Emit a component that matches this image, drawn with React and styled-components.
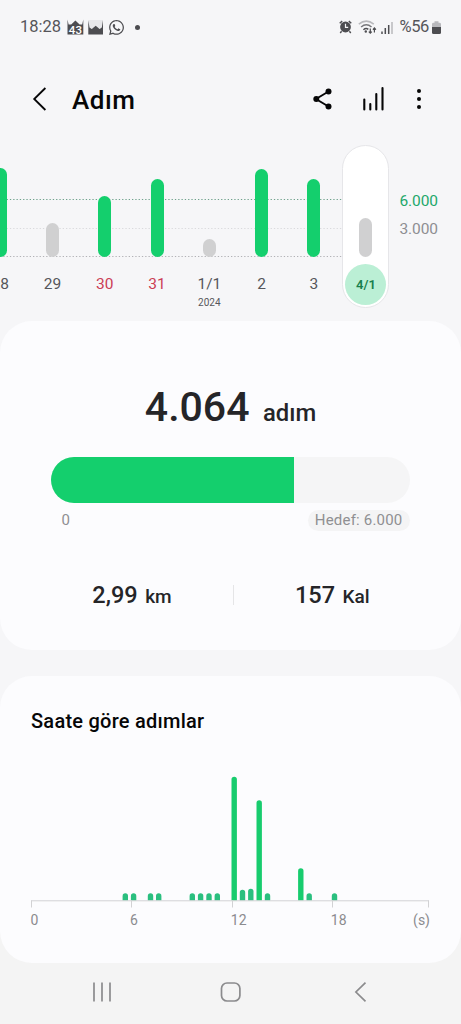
import React from 'react';
import styled, { createGlobalStyle } from 'styled-components';
import { FaWhatsapp } from 'react-icons/fa';

const GlobalStyle = createGlobalStyle`
  * { box-sizing: border-box; }
  body {
    margin: 0;
    background: #f6f6f8;
    font-family: Roboto, "Liberation Sans", sans-serif;
    color: #252528;
  }
`;

const Screen = styled.div`
  width: 461px;
  height: 1024px;
  overflow: hidden;
  display: flex;
  flex-direction: column;
  background: #f6f6f8;
`;

const Icon = styled.svg`
  display: block;
  flex: none;
  overflow: visible;
`;

const StatusBar = styled.div`
  height: 54px;
  padding: 0 20px;
  display: flex;
  align-items: center;
  justify-content: space-between;
  color: #55555a;
  font-size: 16.5px;
  line-height: 20px;
`;

const StatusGroup = styled.div`
  display: flex;
  align-items: center;
  gap: ${(p) => p.$gap}px;
`;

const Clock = styled.span`
  width: 42px;
  margin-right: 1px;
`;

const Percent = styled.span`
  width: 29px;
  margin: 0 -2px 0 1px;
  font-size: 16.5px;
  letter-spacing: -0.4px;
`;

const Dot = styled.span`
  width: 5px;
  height: 5px;
  margin-left: 6px;
  border-radius: 50%;
  background: #4c4c50;
`;

const Header = styled.header`
  height: 91px;
  padding: 0 38px 2px 33px;
  display: flex;
  align-items: center;
`;

const Title = styled.h1`
  flex: 1;
  margin: 2px 0 0 26px;
  font-size: 26px;
  line-height: 32px;
  font-weight: 500;
  letter-spacing: 0.5px;
  color: #060607;
`;

const Actions = styled.div`
  display: flex;
  align-items: center;
  gap: 31px;
`;

const History = styled.section`
  position: relative;
  height: 176px;
  display: flex;
`;

const GridLines = styled.svg`
  position: absolute;
  left: 0;
  top: 0;
`;

const Days = styled.div`
  position: relative;
  display: flex;
  flex: none;
  margin-left: -26px;
`;

const Day = styled.div`
  width: 52.3px;
  height: 163px;
  display: flex;
  flex-direction: column;
  align-items: center;
`;

const DayTrack = styled.div`
  flex: none;
  height: 112px;
  display: flex;
  align-items: flex-end;
`;

const DayBar = styled.div`
  width: 13px;
  height: ${(p) => p.$height}px;
  border-radius: 7px;
  background: ${(p) => (p.$reached ? '#14cf6d' : '#d0d0d1')};
`;

const DayLabel = styled.div`
  margin-top: 17px;
  font-size: 15.5px;
  line-height: 20px;
  color: ${(p) => (p.$holiday ? '#cb3d55' : '#56565b')};
`;

const Year = styled.div`
  margin-top: 3px;
  font-size: 10px;
  line-height: 12px;
  color: #56565b;
`;

const Selected = styled.div`
  width: 47px;
  height: 163px;
  margin-left: 2.4px;
  padding-bottom: 2px;
  display: flex;
  flex-direction: column;
  align-items: center;
  border: 1px solid #e6e6e9;
  border-radius: 24px;
  background: #fff;
  ${DayTrack} { height: 111px; }
`;

const Today = styled.div`
  width: 41px;
  height: 41px;
  margin-top: 7px;
  border-radius: 50%;
  background: #bbefd5;
  color: #187f4d;
  font-size: 13px;
  font-weight: 600;
  line-height: 41px;
  text-align: center;
`;

const Scale = styled.div`
  margin: 46px 0 0 10px;
  display: flex;
  flex-direction: column;
  gap: 8px;
`;

const ScaleLabel = styled.div`
  font-size: 15.5px;
  line-height: 20px;
  letter-spacing: -0.1px;
  color: ${(p) => (p.$goal ? '#1ea86b' : '#8e8e92')};
`;

const Card = styled.section`
  flex: none;
  height: ${(p) => p.$height}px;
  border-radius: 32px;
  background: #fcfcfe;
`;

const SummaryCard = styled(Card)`
  margin-bottom: 26px;
  padding: 61px 51px 0;
`;

const Total = styled.div`
  display: flex;
  justify-content: center;
  align-items: baseline;
  gap: 13.5px;
  height: 50px;
  line-height: 50px;
  font-size: 41px;
  font-weight: 500;
`;

const TotalUnit = styled.span`
  font-size: 23.8px;
`;

const Progress = styled.div`
  height: 46px;
  margin-top: 24.5px;
  border-radius: 23px;
  overflow: hidden;
  background: #f5f5f6;
`;

const ProgressFill = styled.div`
  height: 100%;
  background: #14cf6d;
`;

const ProgressLabels = styled.div`
  margin-top: 7.5px;
  padding-left: 10.5px;
  display: flex;
  justify-content: space-between;
  font-size: 15px;
  line-height: 21px;
  color: #8f8f92;
`;

const Goal = styled.span`
  padding: 0 7.5px 0 7px;
  border-radius: 11px;
  background: #f4f4f5;
  letter-spacing: 0.2px;
`;

const Stats = styled.div`
  margin: 49px 0 0;
  height: 30px;
  display: grid;
  grid-template-columns: 181.5px 1px 1fr;
  align-items: center;
`;

const Stat = styled.div`
  padding-left: ${(p) => p.$indent}px;
  display: flex;
  align-items: baseline;
  gap: 7.5px;
  font-size: 23.5px;
  line-height: 30px;
  font-weight: 500;
`;

const StatUnit = styled.span`
  font-size: 19px;
`;

const Divider = styled.span`
  height: 20px;
  margin-bottom: 2px;
  background: #e5e5e7;
`;

const HourlyCard = styled(Card)`
  padding: 32px 31px 0;
`;

const Heading = styled.h2`
  margin: 0;
  font-size: 20px;
  line-height: 26px;
  font-weight: 500;
  letter-spacing: 0.25px;
  color: #060607;
`;

const HourlyChart = styled.svg`
  display: block;
  margin-top: 36px;
  overflow: visible;
`;

const Hours = styled.div`
  display: grid;
  grid-template-columns: 99.5px 100.8px 100px 1fr;
  margin: 4px 0 0 -0.5px;
  font-size: 14px;
  line-height: 16px;
  color: #8b8b8e;
`;

const LastHours = styled.span`
  display: flex;
  justify-content: space-between;
`;

const NavBar = styled.nav`
  flex: 1;
  padding: 32px 95.5px 3px 92.5px;
  display: flex;
  align-items: center;
  justify-content: space-between;
  margin-top: -32px;
  background: #f4f4f4;
`;

const HourlyLayer = styled.div`
  position: relative;
  z-index: 1;
`;

const days = [
  { label: '28', height: 89, reached: true },
  { label: '29', height: 34 },
  { label: '30', height: 61, reached: true, holiday: true },
  { label: '31', height: 78, reached: true, holiday: true },
  { label: '1/1', height: 18, year: '2024' },
  { label: '2', height: 88, reached: true },
  { label: '3', height: 78, reached: true },
];

// [half-hour slot centre, bar height]
const hourly = [
  [94.3, 7], [102.6, 7], [119.5, 7], [127.7, 7],
  [161.3, 7], [169.6, 7], [178, 7], [186.3, 7],
  [203.2, 123.5], [211.5, 10.5], [219.8, 11.5], [228.2, 100], [236.5, 7],
  [269.8, 32], [278.2, 7], [303.5, 7],
];

const ticks = [0.5, 100.5, 201.5, 301.5, 397.5];

function StatusIcons() {
  return (
    <StatusBar>
      <StatusGroup $gap={4}>
        <Clock>18:28</Clock>
        <Icon width="17" height="16" viewBox="0 0 17 16">
          <path d="M0.5 0.5V15.5H16.3V0.5L15.2 5.4 12.6 5.4 8.4 1.6 4.2 5.4 1.6 5.4Z" fill="#4d4d51" />
          <text x="8.4" y="14.6" textAnchor="middle" fontSize="11.5" fontWeight="500" fill="#fff">43</text>
        </Icon>
        <Icon width="16" height="16" viewBox="0 0 16 16">
          <path d="M1 1H14.5V9H1Z" fill="#e8e8eb" />
          <path d="M0.3 1V15.5H15V1L13.8 8.4 11.6 10 7.7 6.8 3.8 10 1.5 8.4Z" fill="#4d4d51" />
        </Icon>
        <FaWhatsapp size={17} color="#4d4d51" />
        <Dot />
      </StatusGroup>
      <StatusGroup $gap={5.5}>
        <Icon width="13" height="14" viewBox="0 0 13 14">
          <circle cx="6.5" cy="7" r="5.4" fill="#4d4d51" />
          <path d="M0.7 3.3 3.2 1.1M12.3 3.3 9.8 1.1M2.6 11.2 1.2 13M10.4 11.2 11.8 13" stroke="#4d4d51" strokeWidth="1.4" />
          <path d="M6.5 3.7V7.3H9.2" fill="none" stroke="#f6f6f8" strokeWidth="1.2" />
        </Icon>
        <Icon width="18" height="14" viewBox="0 0 18 14">
          <g fill="none" strokeWidth="1.5">
            <path d="M0.8 4.2Q8.3-2 15.8 4.2" stroke="#b9b9bd" />
            <path d="M3.1 7Q8.3 2.6 13.5 7" stroke="#77777b" />
            <path d="M5.4 9.7Q8 7.5 10.3 9.3" stroke="#4d4d51" />
          </g>
          <circle cx="7.8" cy="11.5" r="1.2" fill="#4d4d51" />
          <path d="M12.3 8.5V13M10.8 11.6 12.3 13.2 13.8 11.6M16.4 12.5V8M14.9 9.6 16.4 8 17.9 9.6" fill="none" stroke="#4d4d51" strokeWidth="1.2" />
        </Icon>
        <Icon width="12" height="13" viewBox="0 0 12 13">
          <path d="M1 10.5V13M4.3 7V13M7.7 4V13" stroke="#4d4d51" strokeWidth="1.5" />
          <path d="M11 1V13" stroke="#b9b9bd" strokeWidth="1.5" />
        </Icon>
        <Percent>%56</Percent>
        <Icon width="9" height="13" viewBox="0 0 9 13">
          <path d="M0 3.2Q0 1.8 1.5 1.8H2.5V0.3H6.5V1.8H7.5Q9 1.8 9 3.2V6.5H0Z" fill="#b9b9bd" />
          <path d="M0 6H9V11.5Q9 13 7.5 13H1.5Q0 13 0 11.5Z" fill="#4d4d51" />
        </Icon>
      </StatusGroup>
    </StatusBar>
  );
}

export default function App() {
  return (
    <>
      <GlobalStyle />
      <Screen>
        <StatusIcons />
        <Header>
          <Icon width="13" height="24" viewBox="0 0 13 24">
            <path d="M12.4 1 1.2 12 12.4 23" fill="none" stroke="#060607" strokeWidth="1.8" />
          </Icon>
          <Title>Adım</Title>
          <Actions>
            <Icon width="20" height="22" viewBox="0.5 0 20 22">
              <path d="M16 3.5 3.5 11 16 18.5" fill="none" stroke="#060607" strokeWidth="1.9" />
              <circle cx="3.8" cy="11" r="3" fill="#060607" />
              <circle cx="16" cy="3.6" r="3" fill="#060607" />
              <circle cx="16" cy="18.4" r="3" fill="#060607" />
            </Icon>
            <Icon width="22" height="24" viewBox="1.7 0 22 24">
              <path d="M2 12.5V22.5M8 17V22.5M14 7V22.5M20.2 1V22.5" stroke="#060607" strokeWidth="2.1" strokeLinecap="round" />
            </Icon>
            <Icon width="6" height="22" viewBox="0 0 6 22">
              <circle cx="2" cy="2.9" r="2" fill="#060607" />
              <circle cx="2" cy="10.9" r="2" fill="#060607" />
              <circle cx="2" cy="18.9" r="2" fill="#060607" />
            </Icon>
          </Actions>
        </Header>

        <History>
          <GridLines width="343" height="120">
            <g strokeWidth="1" strokeDasharray="1.3 2">
              <path d="M0 54.5H343" stroke="#6fa28c" />
              <path d="M0 83.5H343" stroke="#dadadd" />
              <path d="M0 111.5H343" stroke="#b2b2b6" />
            </g>
          </GridLines>
          <Days>
            {days.map((d) => (
              <Day key={d.label}>
                <DayTrack>
                  <DayBar $height={d.height} $reached={d.reached} />
                </DayTrack>
                <DayLabel $holiday={d.holiday}>{d.label}</DayLabel>
                {d.year && <Year>{d.year}</Year>}
              </Day>
            ))}
            <Selected>
              <DayTrack>
                <DayBar $height={39} />
              </DayTrack>
              <Today>4/1</Today>
            </Selected>
          </Days>
          <Scale>
            <ScaleLabel $goal>6.000</ScaleLabel>
            <ScaleLabel>3.000</ScaleLabel>
          </Scale>
        </History>

        <SummaryCard $height={329}>
          <Total>
            4.064
            <TotalUnit>adım</TotalUnit>
          </Total>
          <Progress>
            <ProgressFill style={{ width: `${(4064 / 6000) * 100}%` }} />
          </Progress>
          <ProgressLabels>
            <span>0</span>
            <Goal>Hedef: 6.000</Goal>
          </ProgressLabels>
          <Stats>
            <Stat $indent={41.3}>
              2,99
              <StatUnit>km</StatUnit>
            </Stat>
            <Divider />
            <Stat $indent={61.5}>
              157
              <StatUnit>Kal</StatUnit>
            </Stat>
          </Stats>
        </SummaryCard>

        <HourlyLayer>
          <HourlyCard $height={287}>
            <Heading>Saate göre adımlar</Heading>
            <HourlyChart width="398" height="138">
              {hourly.map(([x, h]) => (
                <path
                  key={x}
                  d={`M${x - 2.7} 130.5V${133 - h}a2.7 2.7 0 0 1 5.4 0V130.5Z`}
                  fill={h > 20 ? '#18cc6e' : '#2abf7f'}
                />
              ))}
              <path d="M0 130.8H398" stroke="#d2d2d4" />
              {ticks.map((x) => (
                <path key={x} d={`M${x} 130.5V137.5`} stroke="#d2d2d4" />
              ))}
            </HourlyChart>
            <Hours>
              <span>0</span>
              <span>6</span>
              <span>12</span>
              <LastHours>
                <span>18</span>
                <span>(s)</span>
              </LastHours>
            </Hours>
          </HourlyCard>
        </HourlyLayer>

        <NavBar>
          <Icon width="18" height="20" viewBox="0 0 18 20">
            <path d="M1 0.5V19.5M9 0.5V19.5M17 0.5V19.5" stroke="#8b8b8d" strokeWidth="1.7" />
          </Icon>
          <Icon width="20" height="20" viewBox="2.5 0 20 20">
            <rect x="1" y="1" width="18.4" height="18" rx="5.5" fill="none" stroke="#8b8b8d" strokeWidth="1.7" />
          </Icon>
          <Icon width="11" height="20" viewBox="0 0 11 20">
            <path d="M10.5 0.6 0.9 10 10.5 19.4" fill="none" stroke="#8b8b8d" strokeWidth="1.7" />
          </Icon>
        </NavBar>
      </Screen>
    </>
  );
}
